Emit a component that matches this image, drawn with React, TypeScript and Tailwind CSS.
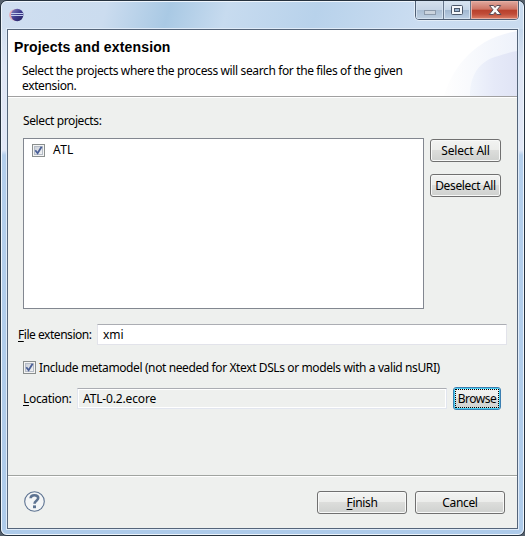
import React from "react";

function Check() {
  return (
    <span className="block h-[13px] w-[13px] shrink-0 border border-[#8a8f8e] bg-[#f4f4f4] p-px">
      <span className="block h-[9px] w-[9px] border border-[#b5bcc6] bg-gradient-to-br from-[#cbd0d8] to-[#f3f4f6]">
        <svg className="-ml-px -mt-px block h-[9px] w-[9px]" viewBox="0 0 9 9" fill="none" stroke="#4a5f97" strokeWidth="1.8">
          <path d="M1.3 4.2 L3.6 7.2 L7.6 0.7" />
        </svg>
      </span>
    </span>
  );
}

function Button({ children, className }: { children: React.ReactNode; className: string }) {
  return (
    <button
      className={
        "flex h-[23px] shrink-0 items-center justify-center whitespace-nowrap rounded-[3px] border border-[#707070] bg-[linear-gradient(#f2f3f2_0%,#ebecea_48%,#dcdddb_50%,#cfd1cf_100%)] pb-px leading-[15px] shadow-[inset_0_0_0_1px_#f8f9f8] " +
        className
      }
    >
      {children}
    </button>
  );
}

function EclipseIcon() {
  return (
    <svg className="block h-[14px] w-[15px]" viewBox="0 0 15 14">
      <defs>
        <linearGradient id="orb" x1="0" x2="1" y1="0" y2="1">
          <stop offset="0" stopColor="#8a86c0" />
          <stop offset="0.5" stopColor="#3f3b8e" />
          <stop offset="1" stopColor="#25215f" />
        </linearGradient>
      </defs>
      <ellipse cx="6" cy="7" rx="5.8" ry="5.8" fill="#e5a8b4" />
      <circle cx="8.2" cy="7" r="6.2" fill="url(#orb)" />
      <path d="M2 5.5H14M2 7.5H14" stroke="#c3cdee" strokeWidth="1" />
    </svg>
  );
}

function TitleBar() {
  return (
    <header className="flex h-[27px] shrink-0 justify-between pl-[7px]">
      <div className="pt-[6px]">
        <EclipseIcon />
      </div>
      <div className="-mt-[2px] mr-[4px] flex h-[20px] w-[104px] overflow-hidden rounded-b-[4px] border border-[#4f5f75] shadow-[0_0_0_1px_#e3edf7]">
        <span className="flex w-[28px] justify-center border-r border-[#66758a] bg-[linear-gradient(#d4e0ed_0%,#c5d4e5_50%,#a9bdd3_51%,#bfd0e2_100%)] shadow-[inset_0_0_0_1px_#d5e2f0]">
          <svg className="block h-[18px] w-[26px]" viewBox="0 0 26 18">
            <rect x="7.5" y="9.5" width="11" height="4" fill="#cad3dd" stroke="#8c9aab" />
          </svg>
        </span>
        <span className="flex w-[27px] justify-center border-r border-[#66758a] bg-[linear-gradient(#dbe6f1_0%,#c5d5e7_50%,#a1b7d0_51%,#bdd0e5_100%)] shadow-[inset_0_0_0_1px_#d5e2f0]">
          <svg className="block h-[18px] w-[26px]" viewBox="0 0 26 18">
            <rect x="7.5" y="4.5" width="11" height="9" rx="1" fill="#f6f8fb" stroke="#4d596b" />
            <rect x="10.5" y="7.5" width="5" height="3" fill="#9bb4d0" stroke="#4d596b" />
          </svg>
        </span>
        <span className="flex flex-1 justify-center bg-[linear-gradient(#e0a99f_0%,#cd7464_46%,#b8402c_50%,#c04c38_72%,#dc8069_100%)] shadow-[inset_0_0_0_1px_#e9b0a4]">
          <svg className="block h-[18px] w-[46px]" viewBox="0 0 46 18">
            <path d="M17.5 4.5h4l1.6 2 1.6-2h4l-3.5 4.3 3.8 4.7h-4.2l-1.7-2.2-1.7 2.2h-4.2l3.8-4.7z" fill="#fafafa" stroke="#5b4b55" strokeWidth="1" />
          </svg>
        </span>
      </div>
    </header>
  );
}

function BannerArt() {
  return (
    <svg className="block h-[66px] w-[75px] shrink-0" viewBox="0 0 75 66">
      <defs>
        <linearGradient id="outer" x1="0" x2="1">
          <stop offset="0" stopColor="#fefefe" />
          <stop offset="1" stopColor="#eef2fb" />
        </linearGradient>
        <linearGradient id="inner" x1="0" x2="1">
          <stop offset="0" stopColor="#f1f5fc" />
          <stop offset="0.5" stopColor="#e6eaf8" />
          <stop offset="1" stopColor="#e0e4f5" />
        </linearGradient>
      </defs>
      <path d="M2 66C8 46 20 26 43 12C54 6 64 3 75 1V66Z" fill="url(#outer)" />
      <path d="M28 66C28 42 40 31 53 27C62 24 69 22 75 21V66Z" fill="url(#inner)" />
    </svg>
  );
}

export default function App() {
  return (
    <div className="h-[536px] w-[525px] bg-[#55606c] font-['Noto_Sans','Open_Sans',sans-serif] text-[12px] text-black">
      <div className="flex h-[536px] w-[525px] flex-col overflow-hidden rounded-[7px] border border-[#26323f] bg-[linear-gradient(to_right,#d3e0f0_0px,#c9dbee_110px,#abcae5_190px,#c9dcef_260px,#b4cfea_350px,#d0e0f2_450px,#c3d6eb_525px)]">
        <div className="flex h-[534px] w-[523px] flex-col rounded-[6px] border border-[#eef5fc] bg-[linear-gradient(transparent_0px,transparent_29px,#dfe6f5_65px,#e2e8f6_148px,#b4cfec_153px,#aecbea_100%)]">
          <div className="-mb-[1px] rounded-t-[5px] bg-[linear-gradient(105deg,#cfdef0_0%,#cbdcef_20%,#a9c9e4_32%,#c7dbef_43%,#b8d2eb_60%,#cbddf1_80%,#c9dbef_100%)]">
            <TitleBar />
          </div>
          <main className="ml-[5px] mt-[1px] flex h-[500px] w-[511px] flex-col border border-[#55657a] bg-[#eef0ee] shadow-[0_0_0_1px_#dfebf8]">
            <section className="flex h-[67px] shrink-0 border-b border-[#a0a0a0] bg-white">
              <div className="w-[434px] shrink-0 pl-[6px] pt-[9px]">
                <h1 className="whitespace-nowrap font-['Liberation_Sans',Arial,sans-serif] text-[14px] font-bold leading-[16px] tracking-[0.15px]">
                  Projects and extension
                </h1>
                <p className="whitespace-nowrap pl-[8px] pt-[8px] leading-[15px] tracking-[-0.37px]">
                  Select the projects where the process will search for the files of the given
                  <br />
                  extension.
                </p>
              </div>
              <BannerArt />
            </section>

            <section className="flex h-[379px] shrink-0 flex-col border-b border-[#a0a4a0] border-t border-t-white">
              <div className="pl-[15px] pt-[15px]">
                <p className="h-[25px] leading-[15px] tracking-[-0.39px]">Select projects:</p>
                <div className="flex gap-[6px]">
                  <div className="h-[171px] w-[401px] border border-[#828790] bg-white pl-[8px] pt-[5px]">
                    <label className="flex items-start gap-[8px]">
                      <Check />
                      <span className="-mt-[2px] leading-[15px] tracking-[0.3px]">ATL</span>
                    </label>
                  </div>
                  <div className="flex flex-col gap-[12px] pt-px">
                    <Button className="w-[71px] tracking-[-0.2px]">Select All</Button>
                    <Button className="w-[71px] tracking-[-0.37px]">Deselect All</Button>
                  </div>
                </div>
              </div>

              <div className="mt-[15px] flex items-center pl-[10px]">
                <label className="w-[79px] whitespace-nowrap leading-[15px] tracking-[-0.46px]">
                  <u className="underline-offset-2">F</u>ile extension:
                </label>
                <div className="h-[21px] w-[410px] border border-[#e2e3ea] border-t-[#abadb3] bg-white pl-[5px] pt-[2px] leading-[15px]">
                  xmi
                </div>
              </div>

              <label className="mt-[15px] flex h-[15px] items-center gap-[3px] pl-[15px]">
                <Check />
                <span className="whitespace-nowrap leading-[15px] tracking-[-0.39px]">
                  Include metamodel (not needed for Xtext DSLs or models with a valid nsURI)
                </span>
              </label>

              <div className="mt-[12px] flex items-center pl-[15px]">
                <label className="w-[54px] whitespace-nowrap leading-[15px] tracking-[-0.32px]">
                  <u className="underline-offset-2">L</u>ocation:
                </label>
                <div className="h-[21px] w-[370px] border border-[#e2e6ef] border-t-[#abadb3] pl-[5px] pt-[2px] leading-[15px] tracking-[-0.15px] shadow-[inset_0_0_0_1px_#fff]">
                  ATL-0.2.ecore
                </div>
                <button className="ml-[6px] h-[23px] w-[48px] rounded-[3px] border border-[#3c7fb1] bg-[linear-gradient(#f2f3f2_0%,#ebecea_48%,#dcdddb_50%,#cfd1cf_100%)] p-px shadow-[inset_0_0_0_1px_#48d0f5]">
                  <span className="flex h-[19px] items-center justify-center border border-dotted border-black pb-px leading-[15px] tracking-[-0.5px]">
                    Browse
                  </span>
                </button>
              </div>
            </section>

            <footer className="flex flex-1 items-start border-t border-white pl-[16px] pt-[14px]">
              <svg className="block h-[21px] w-[21px]" viewBox="0 0 21 21" fill="none" stroke="#5d7391">
                <circle cx="10.5" cy="10.5" r="9.8" strokeWidth="1.1" fill="#f3f5f6" />
                <path d="M6.6 7.3C6.7 4.9 8.3 4.2 10.4 4.2c2.3 0 3.8 1 3.8 2.9 0 2.6-3.7 2.8-3.7 5.7" strokeWidth="2.6" />
                <path d="M10.5 14.4v2.8" strokeWidth="3" />
              </svg>
              <div className="ml-[272px] flex gap-[8px]">
                <Button className="w-[90px] tracking-[-0.35px]">
                  <span>
                    <u className="underline-offset-2">F</u>inish
                  </span>
                </Button>
                <Button className="w-[90px] tracking-[-0.35px]">Cancel</Button>
              </div>
            </footer>
          </main>
        </div>
      </div>
    </div>
  );
}
